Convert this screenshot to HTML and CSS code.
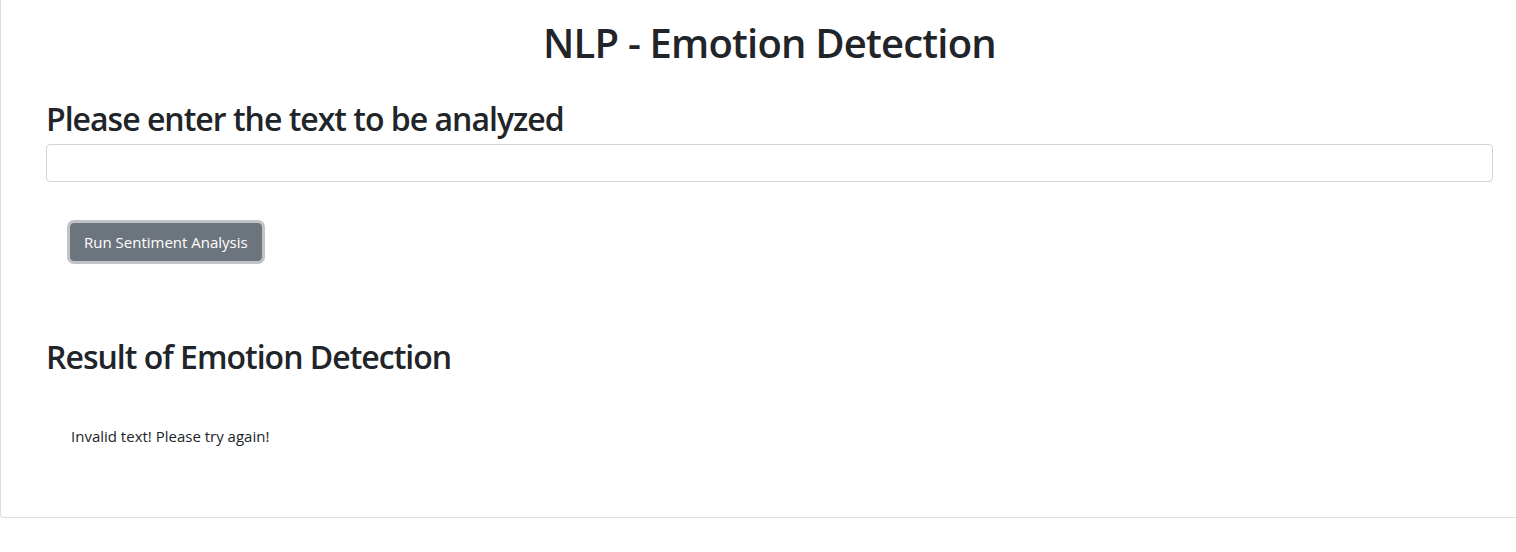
FILE: index.html
```html
<!DOCTYPE html>
<html lang="en">
<head>
<meta charset="utf-8">
<title>NLP - Emotion Detection</title>
<link rel="stylesheet" href="styles.css">
</head>
<body>
  <div class="card">
    <h1 class="title">NLP - Emotion Detection</h1>
    <h2 class="section-heading">Please enter the text to be analyzed</h2>
    <input class="form-control" type="text" id="textToAnalyze">
    <div class="actions">
      <button class="btn btn-secondary" type="button">Run Sentiment Analysis</button>
    </div>
    <h2 class="section-heading result-heading">Result of Emotion Detection</h2>
    <p class="result">Invalid text! Please try again!</p>
  </div>
</body>
</html>
```

FILE: styles.css
```css
html, body {
  margin: 0;
  padding: 0;
  overflow: hidden;
  background: #fff;
}

body {
  font-family: "Open Sans", "Noto Sans", "Liberation Sans", sans-serif;
  color: #212529;
  font-size: 16px;
  line-height: 1.5;
}

.card {
  box-sizing: border-box;
  width: 1538px;
  height: 518px;
  padding: 19px 45px 0 45px;
  border-left: 1px solid #dedede;
  border-bottom: 1px solid #dedede;
  border-bottom-left-radius: 4px;
}

.title {
  margin: 0;
  font-size: 40px;
  font-weight: 600;
  letter-spacing: -0.8px;
  line-height: 48px;
  text-align: center;
}

.section-heading {
  margin: 33px 0 6px 0;
  font-size: 32px;
  font-weight: 600;
  letter-spacing: -1px;
  line-height: 38px;
}

.form-control {
  display: block;
  box-sizing: border-box;
  width: 100%;
  height: 38px;
  margin: 0;
  padding: 6px 12px;
  font: inherit;
  border: 1px solid #ced4da;
  border-radius: 4px;
  background: #fff;
}

.actions {
  padding: 41px 0 0 24px;
}

.btn {
  box-sizing: border-box;
  height: 38px;
  padding: 6px 13px;
  font-family: inherit;
  font-size: 15px;
  line-height: 24px;
  border: 1px solid #6c757d;
  border-radius: 4px;
  cursor: pointer;
}

.btn-secondary {
  color: #fff;
  background: #6c757d;
  box-shadow: 0 0 0 3px rgba(130, 138, 145, 0.5);
}

.result-heading {
  margin-top: 77px;
}

.result {
  margin: 48px 0 0 25px;
  font-size: 15px;
  line-height: 24px;
}
```
